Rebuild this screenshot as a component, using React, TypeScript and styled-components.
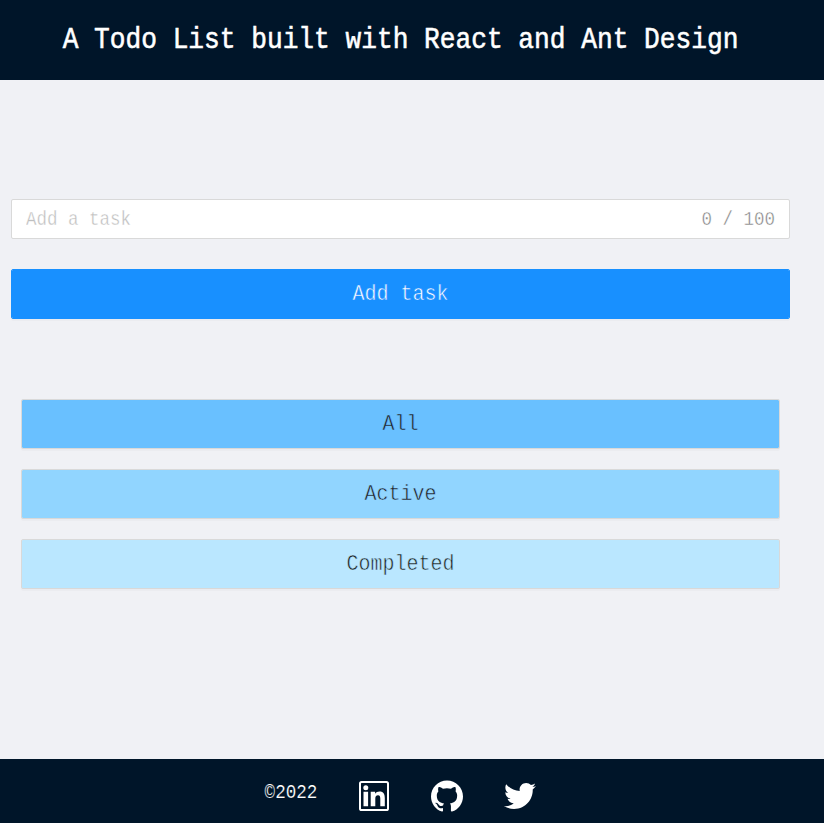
import React from 'react';
import styled, { createGlobalStyle } from 'styled-components';
import { FaTwitter } from 'react-icons/fa';
import { SiGithub } from 'react-icons/si';

const GlobalStyle = createGlobalStyle`
  * { box-sizing: border-box; }
  body { margin: 0; background: #f0f1f5; overflow: hidden; }
  body, button, input { font-family: "Liberation Mono", monospace; }
`;

const Layout = styled.div`
  display: flex;
  flex-direction: column;
  height: 823px;
  background: #f0f1f5;
`;

const Header = styled.header`
  height: 80px;
  padding-right: 23px;
  display: flex;
  align-items: center;
  justify-content: center;
  background: #001529;
`;

const Title = styled.h1`
  margin: 0;
  color: #fff;
  font-size: 26.2px;
  font-weight: 400;
  line-height: 32px;
  white-space: nowrap;
  transform: scaleY(1.15);
  -webkit-text-stroke: 0.5px #fff;
`;

const Content = styled.main`
  flex: 1;
  padding: 119px 34px 0 11px;
`;

const Field = styled.label`
  display: flex;
  align-items: center;
  height: 40px;
  padding: 0 14px;
  border: 1px solid #d9d9d9;
  border-radius: 2px;
  background: #fff;
`;

const TaskInput = styled.input`
  flex: 1;
  min-width: 0;
  padding: 0;
  border: 0;
  outline: 0;
  background: transparent;
  font-size: 17.5px;
  transform: scaleY(1.15);
  &::placeholder { color: #bfbfbf; opacity: 1; -webkit-text-stroke: 0.3px #fff; }
`;

const Counter = styled.span`
  color: #808080;
  font-size: 17.5px;
  transform: scaleY(1.15);
  -webkit-text-stroke: 0.4px #fff;
`;

const Button = styled.button<{ $fill: string; $ink: string; $outline: string }>`
  display: flex;
  align-items: center;
  justify-content: center;
  width: 100%;
  height: 50px;
  padding: 0 0 2px;
  border: 1px solid ${p => p.$outline};
  border-radius: 2px;
  background: ${p => p.$fill};
  background-clip: padding-box;
  color: ${p => p.$ink};
  font-size: 20px;
  box-shadow: 0 2px 0 rgba(0, 0, 0, 0.02);
`;

const ButtonText = styled.span<{ $thin: string }>`
  transform: scaleY(1.1);
  -webkit-text-stroke: 0.5px ${p => p.$thin};
`;

const AddRow = styled.div`
  margin-top: 30px;
`;

const Filters = styled.div`
  display: grid;
  gap: 20px;
  margin: 80px 10px 0;
`;

const Footer = styled.footer`
  display: flex;
  align-items: center;
  justify-content: center;
  height: 64px;
  padding: 9px 23px 0 0;
  background: #001529;
  color: #fff;
`;

const Copyright = styled.span`
  font-size: 17.6px;
  margin: -7px 41px 0 0;
  transform: scaleY(1.12);
  -webkit-text-stroke: 0.15px #001529;
`;

const Socials = styled.nav`
  display: flex;
  align-items: center;
  gap: 41px;
  svg { display: block; width: 32px; height: 32px; }
`;

const LinkedinIcon = () => (
  <svg viewBox="0 0 32 32" fill="#fff" aria-label="LinkedIn">
    <rect x="2" y="2" width="28" height="28" rx="1.6" fill="none" stroke="#fff" strokeWidth="2" />
    <circle cx="7.8" cy="7.8" r="2.5" />
    <path d="M5.5 11.8h4.6v14.5H5.5zM12.7 11.8h4.4v2c.9-1.5 2.6-2.3 4.4-2.3 4 0 5.3 2.5 5.3 6.4v8.4h-4.5v-7.5c0-1.9-.3-3.5-2.3-3.5-2 0-2.7 1.4-2.7 3.5v7.5h-4.6z" />
  </svg>
);

const filters = [
  { label: 'All', fill: '#69c0ff' },
  { label: 'Active', fill: '#91d5ff' },
  { label: 'Completed', fill: '#bae7ff' },
];

export default function App() {
  return (
    <Layout>
      <GlobalStyle />
      <Header><Title>A Todo List built with React and Ant Design</Title></Header>
      <Content>
        <Field>
          <TaskInput placeholder="Add a task" maxLength={100} />
          <Counter>0 / 100</Counter>
        </Field>
        <AddRow>
          <Button $fill="#1890ff" $ink="#fff" $outline="#1890ff">
            <ButtonText $thin="#1890ff">Add task</ButtonText>
          </Button>
        </AddRow>
        <Filters>
          {filters.map(f => (
            <Button key={f.label} $fill={f.fill} $ink="#1f1f1f" $outline="#d9d9d9">
              <ButtonText $thin={f.fill}>{f.label}</ButtonText>
            </Button>
          ))}
        </Filters>
      </Content>
      <Footer>
        <Copyright>©2022</Copyright>
        <Socials>
          <LinkedinIcon />
          <SiGithub />
          <FaTwitter />
        </Socials>
      </Footer>
    </Layout>
  );
}
